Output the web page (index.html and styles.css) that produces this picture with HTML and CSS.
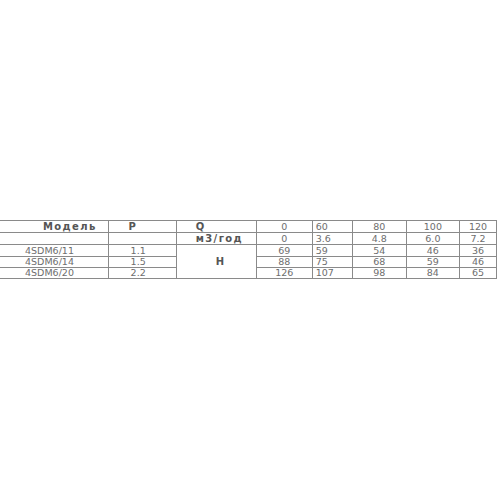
FILE: index.html
```html
<!DOCTYPE html>
<html>
<head>
<meta charset="utf-8">
<link rel="stylesheet" href="styles.css">
</head>
<body>
<div class="page">
<table class="spec">
<colgroup>
<col class="c-model"><col class="c-p"><col class="c-q"><col class="c-n1"><col class="c-n2"><col class="c-n3"><col class="c-n4"><col class="c-n5">
</colgroup>
<tr class="r1">
<th class="model-h">Модель</th>
<th class="p">P</th>
<th class="q">Q</th>
<td>0</td><td class="left">60</td><td>80</td><td>100</td><td>120</td>
</tr>
<tr class="r2">
<td></td>
<td></td>
<th class="q">м3/год</th>
<td>0</td><td class="left">3.6</td><td>4.8</td><td>6.0</td><td>7.2</td>
</tr>
<tr class="r3">
<td class="model">4SDM6/11</td>
<td class="p">1.1</td>
<th class="h" rowspan="3">H</th>
<td>69</td><td class="left">59</td><td>54</td><td>46</td><td>36</td>
</tr>
<tr class="r4">
<td class="model">4SDM6/14</td>
<td class="p">1.5</td>
<td>88</td><td class="left">75</td><td>68</td><td>59</td><td>46</td>
</tr>
<tr class="r5">
<td class="model">4SDM6/20</td>
<td class="p">2.2</td>
<td>126</td><td class="left">107</td><td>98</td><td>84</td><td>65</td>
</tr>
</table>
</div>
</body>
</html>
```

FILE: styles.css
```css
html, body {
  margin: 0;
  padding: 0;
  background: #ffffff;
}
.page {
  padding-top: 220px;
}
.spec {
  border-collapse: collapse;
  table-layout: fixed;
  width: 497px;
  font-family: "DejaVu Sans", Verdana, sans-serif;
  font-size: 9.5px;
  color: #6e6e6e;
}
.c-model { width: 108px; }
.c-p { width: 68px; }
.c-q { width: 80px; }
.c-n1 { width: 56px; }
.c-n2 { width: 40px; }
.c-n3 { width: 54px; }
.c-n4 { width: 53px; }
.c-n5 { width: 37px; }
.spec td, .spec th {
  border: 1px solid #8a8a8a;
  padding: 0;
  text-align: center;
  line-height: 10px;
  white-space: nowrap;
  overflow: hidden;
}
.spec tr > :first-child {
  border-left: none;
}
.r1 td, .r1 th, .r2 td, .r2 th { height: 11px; }
.r3 td, .r3 th { height: 11px; }
.r4 td, .r5 td { height: 10px; }
.spec th {
  font-weight: bold;
  font-size: 10px;
  letter-spacing: 1.4px;
  color: #555555;
  text-align: left;
}
.spec th.model-h { padding-left: 43px; }
.spec th.p { padding-left: 20px; }
.spec td.p { text-align: left; padding-left: 22px; }
.spec th.q { padding-left: 19px; }
.spec th.h { padding-left: 39px; vertical-align: middle; }
.spec td.model { text-align: left; padding-left: 25px; }
.spec td.left { text-align: left; padding-left: 3px; }
```
